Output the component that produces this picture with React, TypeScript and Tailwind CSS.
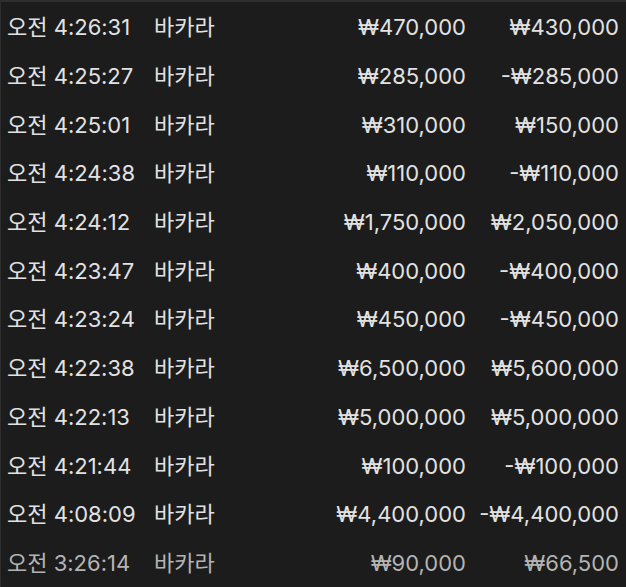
import React from "react";

type Row = { time: string; game: string; bet: string; win: string };

const rows: Row[] = [
  { time: "오전 4:26:31", game: "바카라", bet: "₩470,000", win: "₩430,000" },
  { time: "오전 4:25:27", game: "바카라", bet: "₩285,000", win: "-₩285,000" },
  { time: "오전 4:25:01", game: "바카라", bet: "₩310,000", win: "₩150,000" },
  { time: "오전 4:24:38", game: "바카라", bet: "₩110,000", win: "-₩110,000" },
  { time: "오전 4:24:12", game: "바카라", bet: "₩1,750,000", win: "₩2,050,000" },
  { time: "오전 4:23:47", game: "바카라", bet: "₩400,000", win: "-₩400,000" },
  { time: "오전 4:23:24", game: "바카라", bet: "₩450,000", win: "-₩450,000" },
  { time: "오전 4:22:38", game: "바카라", bet: "₩6,500,000", win: "₩5,600,000" },
  { time: "오전 4:22:13", game: "바카라", bet: "₩5,000,000", win: "₩5,000,000" },
  { time: "오전 4:21:44", game: "바카라", bet: "₩100,000", win: "-₩100,000" },
  { time: "오전 4:08:09", game: "바카라", bet: "₩4,400,000", win: "-₩4,400,000" },
  { time: "오전 3:26:14", game: "바카라", bet: "₩90,000", win: "₩66,500" },
];

export default function App() {
  return (
    <div
      className="w-[626px] h-[587px] overflow-hidden bg-[#1c1c1c] border-t-2 border-l border-[#2e2e2e] pt-[1.5px] text-[22px] text-[#e2e2e2]"
      style={{ fontFamily: '"Inter", "Noto Sans CJK KR", sans-serif' }}
    >
      {rows.map((r, i) => (
        <div
          key={i}
          className={`flex items-center h-[48.7px] pl-[6px] pr-[7px] whitespace-nowrap ${
            i === rows.length - 1 ? "text-[#b4b4b4]" : ""
          }`}
        >
          <div className="w-[147px]">{r.time}</div>
          <div className="flex-1">{r.game}</div>
          <div className="text-right">{r.bet}</div>
          <div className="w-[141px] ml-3 text-right">{r.win}</div>
        </div>
      ))}
    </div>
  );
}
